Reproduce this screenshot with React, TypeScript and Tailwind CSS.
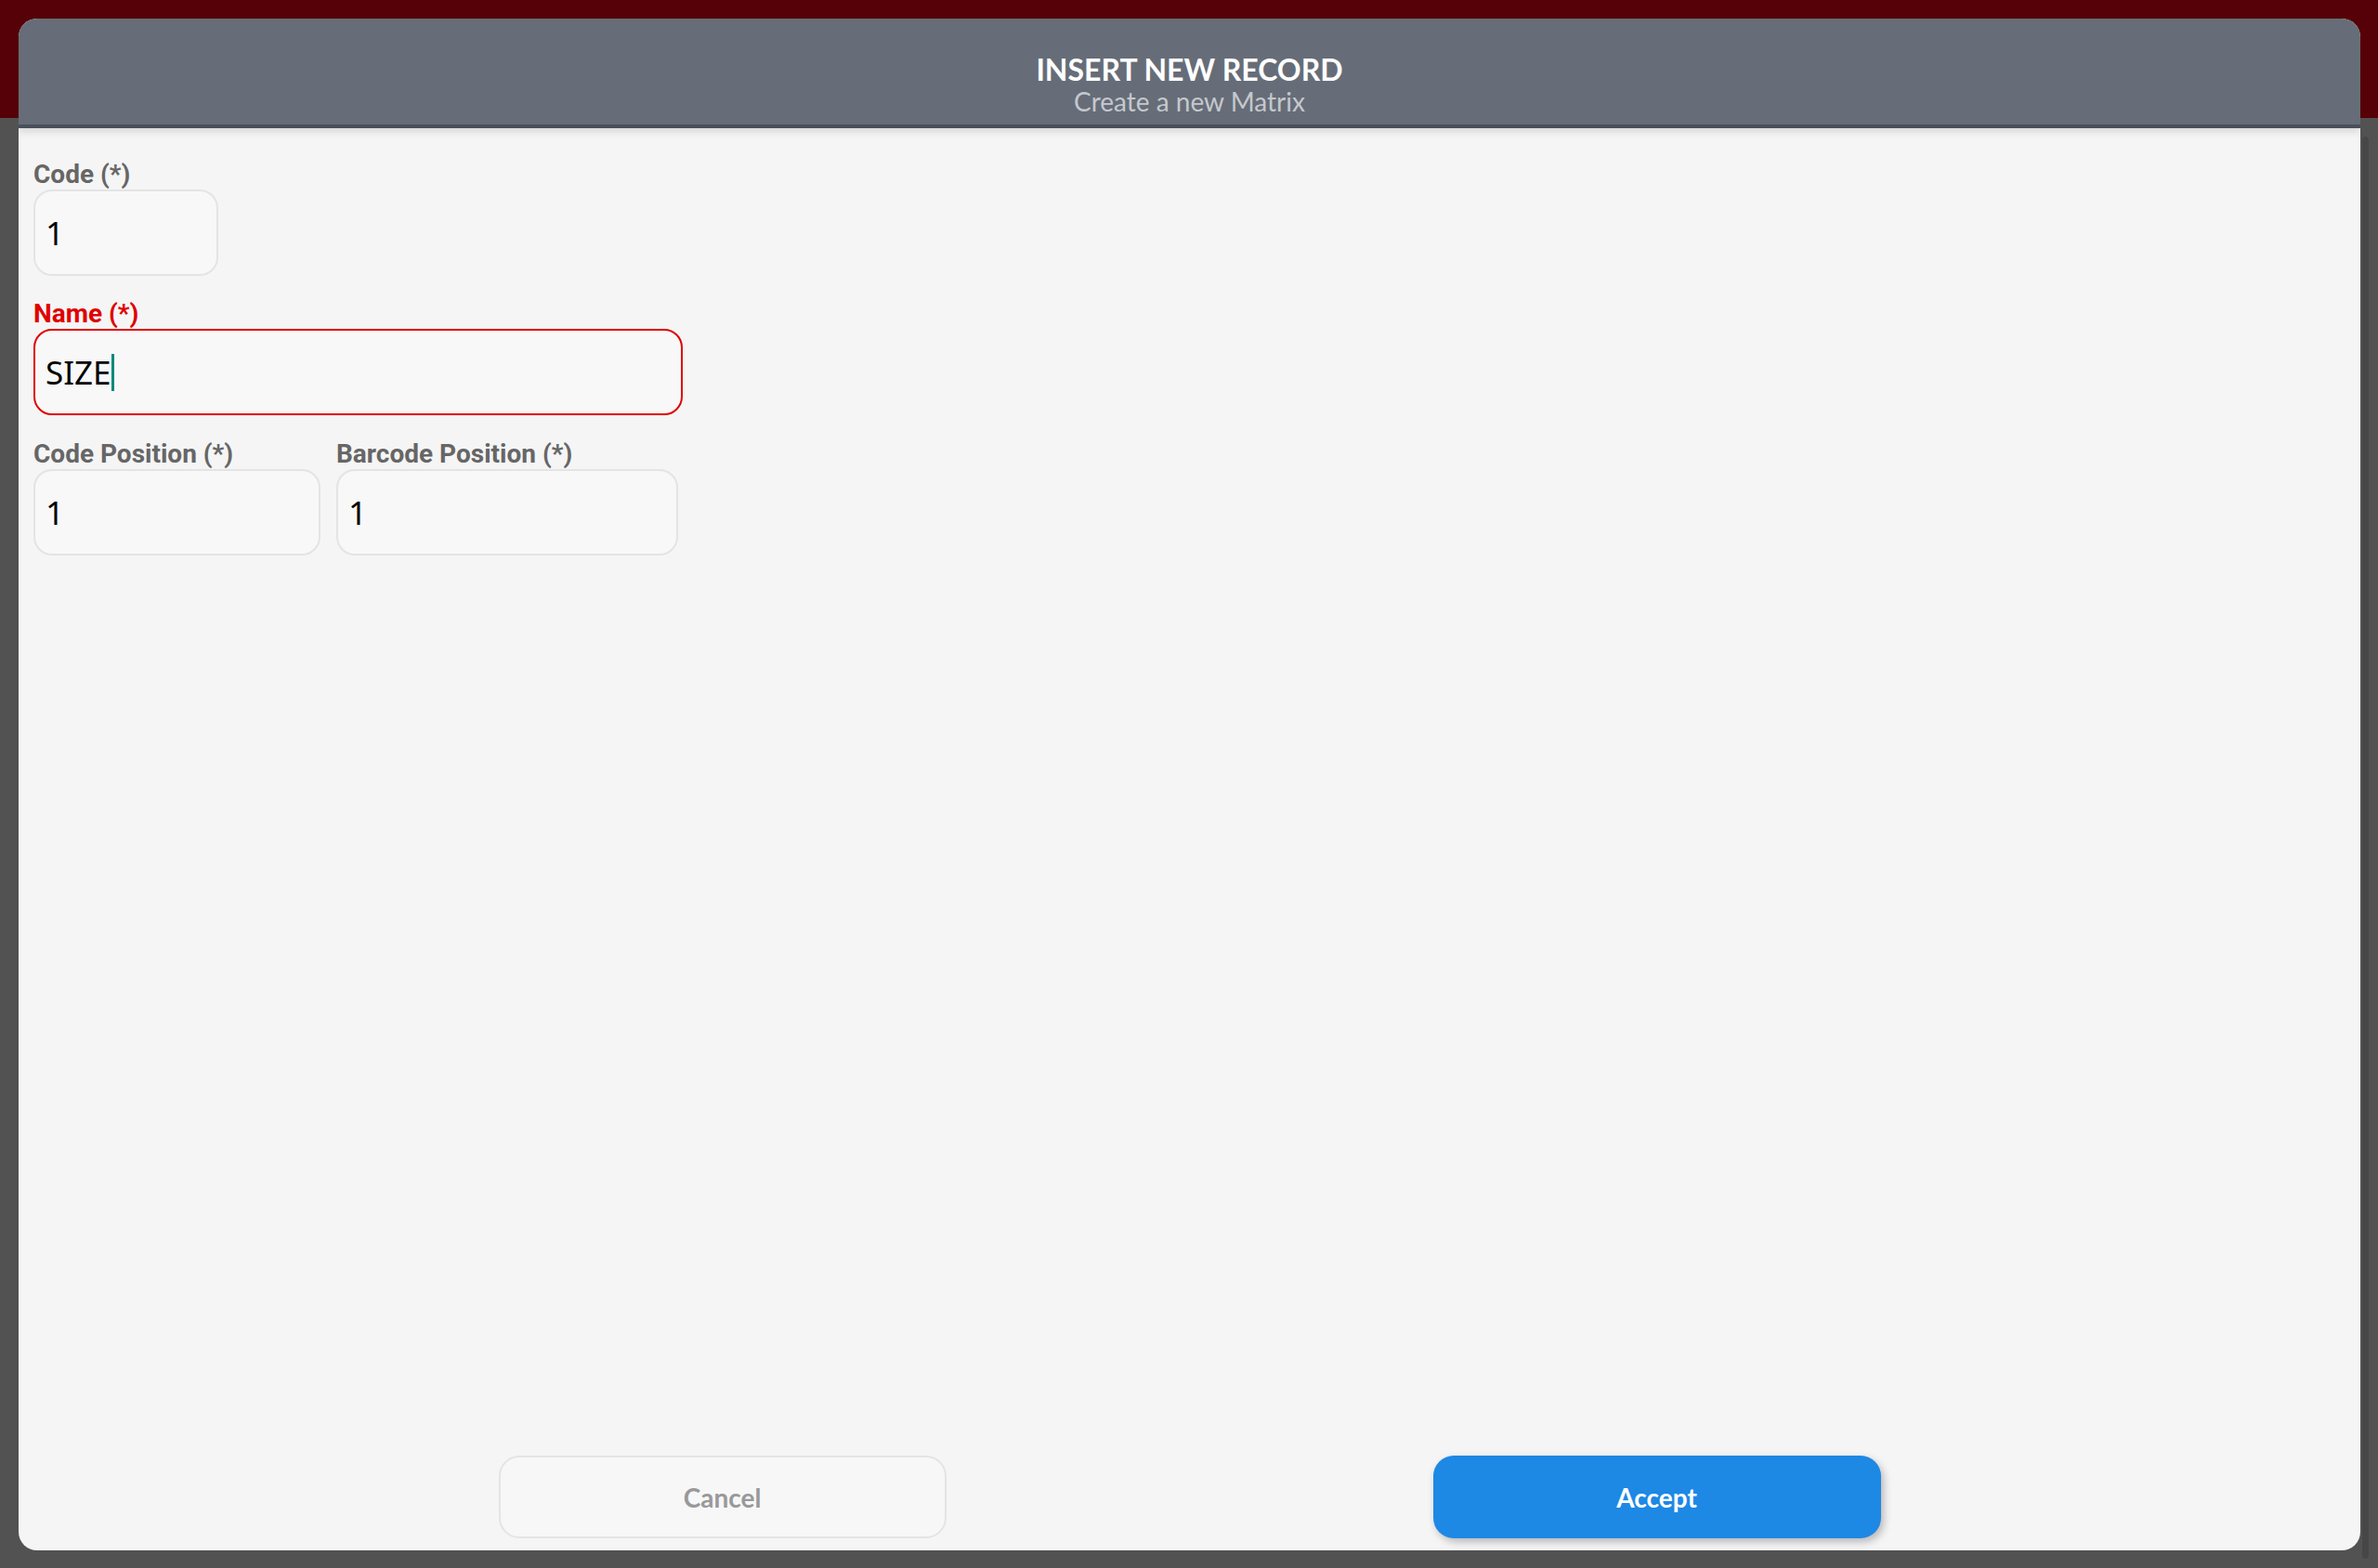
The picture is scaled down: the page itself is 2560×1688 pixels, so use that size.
import React from "react";

interface FieldProps {
  label: string;
  value: string;
  width: string;
  error?: boolean;
  focused?: boolean;
}

function Field({ label, value, width, error, focused }: FieldProps) {
  return (
    <div className="flex flex-col">
      <label
        className={`font-['Roboto',sans-serif] text-[28px] leading-[32px] font-bold ${
          error ? "text-[#e00000]" : "text-[#666666]"
        }`}
      >
        {label}
      </label>
      <div
        className={`${width} h-[93px] rounded-[20px] border-2 bg-[#f8f8f8] px-[11px] flex items-center ${
          error ? "border-[#e00000]" : "border-[#e4e4e4]"
        }`}
      >
        <span className="font-['Noto_Sans',sans-serif] text-[35px] text-black leading-none">
          {value}
        </span>
        {focused && <span className="inline-block w-[3px] h-[40px] bg-[#00897b]" />}
      </div>
    </div>
  );
}

export default function App() {
  return (
    <div className="relative w-[2560px] h-[1688px] overflow-hidden bg-[#525252]">
      {/* page behind the overlay */}
      <div className="flex flex-col h-full">
        <div className="h-[127px] bg-[#560007]" />
        <div className="flex-1 flex justify-end pr-[10px] pt-[20px] pb-[10px]">
          <div className="w-[7px] h-full rounded-full bg-[#474747]" />
        </div>
      </div>

      {/* modal */}
      <div className="absolute left-[20px] top-[20px] w-[2521px] h-[1649px] rounded-[20px] overflow-hidden bg-[#f5f5f5] flex flex-col">
        <div className="h-[118px] shrink-0 bg-[#666d78] border-b-4 border-[#4a505a] flex flex-col items-center pt-[37px] shadow-[0_4px_8px_rgba(0,0,0,0.12)] relative z-10">
          <div className="font-['Lato',sans-serif] font-bold text-white text-[32px] leading-[36px]">
            INSERT NEW RECORD
          </div>
          <div className="font-['Lato',sans-serif] text-[#c5c8cd] text-[28px] leading-[32px]">
            Create a new Matrix
          </div>
        </div>

        <div className="flex-1 flex flex-col px-[16px] pt-[34px]">
          <Field label="Code (*)" value="1" width="w-[199px]" />
          <div className="mt-[25px]">
            <Field label="Name (*)" value="SIZE" width="w-[699px]" error focused />
          </div>
          <div className="mt-[26px] flex gap-[17px]">
            <Field label="Code Position (*)" value="1" width="w-[309px]" />
            <Field label="Barcode Position (*)" value="1" width="w-[368px]" />
          </div>
        </div>

        <div className="flex justify-center gap-[524px] pb-[13px]">
          <button className="w-[482px] h-[89px] rounded-[22px] border-2 border-[#e4e4e4] bg-[#f7f7f7] font-['Lato',sans-serif] font-bold text-[28px] text-[#999999]">
            Cancel
          </button>
          <button className="w-[482px] h-[89px] rounded-[22px] bg-[#1e88e5] font-['Lato',sans-serif] font-bold text-[28px] text-white shadow-[3px_4px_8px_rgba(0,0,0,0.25)]">
            Accept
          </button>
        </div>
      </div>
    </div>
  );
}
